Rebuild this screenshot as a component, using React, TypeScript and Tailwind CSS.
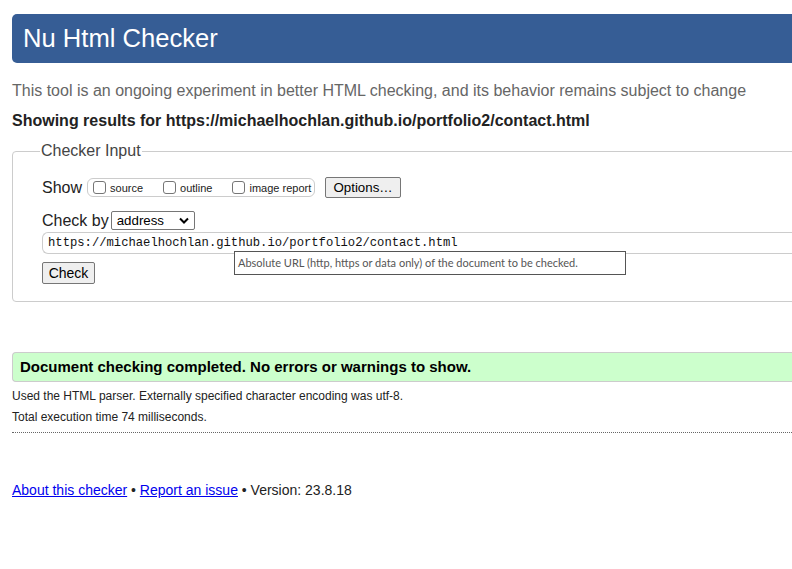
const sans = "font-['Liberation_Sans',Arial,sans-serif]";

function Box({ label }: { label: string }) {
  return (
    <label className="flex shrink-0 items-center whitespace-nowrap">
      <span className="mr-[4px] inline-block h-[13px] w-[13px] rounded-[3px] border border-[#767676] bg-white" />
      <span className="text-[11px] text-[#222]">{label}</span>
    </label>
  );
}

export default function App() {
  return (
    <div className={`min-h-[569px] w-full overflow-hidden bg-white ${sans}`}>
      <div className="w-[840px] pl-3 pt-[14px]">
        <header className="flex h-[49px] items-center rounded-l-[5px] bg-[#365d95] pl-[11px]">
          <h1 className="text-[25.6px] leading-none text-white">Nu Html Checker</h1>
        </header>

        <p className="mt-[19px] text-[16px] leading-[18px] text-[#666]">
          This tool is an ongoing experiment in better HTML checking, and its behavior remains subject to change
        </p>
        <p className="mt-[12px] text-[16px] font-bold leading-[18px] text-[#222]">
          Showing results for https://michaelhochlan.github.io/portfolio2/contact.html
        </p>

        <fieldset className="mt-[12px] rounded-[4px] border border-[#ccc] pb-[17px] pl-[29px]">
          <legend className="-ml-[2px] px-[1px] text-[16px] leading-[18px] text-[#444]">Checker Input</legend>

          <div className="mt-[17px] flex items-center leading-[20px]">
            <span className="text-[16px] text-[#222]">Show</span>
            <div className="ml-[5px] flex h-[19px] w-[228px] shrink-0 items-center gap-[20px] rounded-[6px] border border-[#ccc] pl-[5px]">
              <Box label="source" />
              <Box label="outline" />
              <Box label="image report" />
            </div>
            <button className="ml-[10px] h-[21px] w-[76px] rounded-[2px] border border-[#767676] bg-[#efefef] text-[13.3px] text-black">
              Options…
            </button>
          </div>

          <div className="mt-[13px] flex items-center leading-[19px]">
            <span className="text-[16px] text-[#222]">Check by</span>
            <div className="ml-[2px] flex h-[19px] w-[84px] items-center justify-between rounded-[2px] border border-[#767676] px-[5px]">
              <span className="text-[13.3px] text-black">address</span>
              <svg width="10" height="7" viewBox="0 0 10 7">
                <path d="M1 1.5 L5 5.5 L9 1.5" fill="none" stroke="#000" strokeWidth="2" />
              </svg>
            </div>
          </div>

          <div className="relative mt-[2px]">
            <div className="flex h-[22px] items-center rounded-l-[6px] border border-r-0 border-[#ccc] pl-[5px] font-['Liberation_Mono',monospace] text-[12.2px] text-[#111]">
              https://michaelhochlan.github.io/portfolio2/contact.html
            </div>
            <div className="absolute left-[192px] top-[19px] z-10 flex h-[24px] w-[392px] items-center border border-[#555] bg-white pl-[3px] font-['Lato',sans-serif] text-[11px] text-[#555]">
              Absolute URL (http, https or data only) of the document to be checked.
            </div>
          </div>

          <button className="mt-[8px] block h-[22px] w-[53px] rounded-[2px] border border-[#767676] bg-[#efefef] text-[14px] leading-[20px] text-black">
            Check
          </button>
        </fieldset>

        <div className="mt-[50px] flex h-[30px] items-center rounded-l-[4px] border border-r-0 border-[#ccc] bg-[#ccffcc] pl-[7px]">
          <span className="text-[15px] font-bold text-black">Document checking completed. No errors or warnings to show.</span>
        </div>

        <p className="mt-[7px] text-[12px] leading-[14px] text-[#222]">
          Used the HTML parser. Externally specified character encoding was utf-8.
        </p>
        <p className="mt-[7px] text-[12px] leading-[14px] text-[#222]">Total execution time 74 milliseconds.</p>
        <div className="mt-[8px] border-t border-dotted border-[#666]" />

        <p className="mt-[47px] text-[14px] text-[#222]">
          <a href="#" className="text-[#0000ee] underline">About this checker</a>
          {" • "}
          <a href="#" className="text-[#0000ee] underline">Report an issue</a>
          {" • Version: 23.8.18"}
        </p>
      </div>
    </div>
  );
}
